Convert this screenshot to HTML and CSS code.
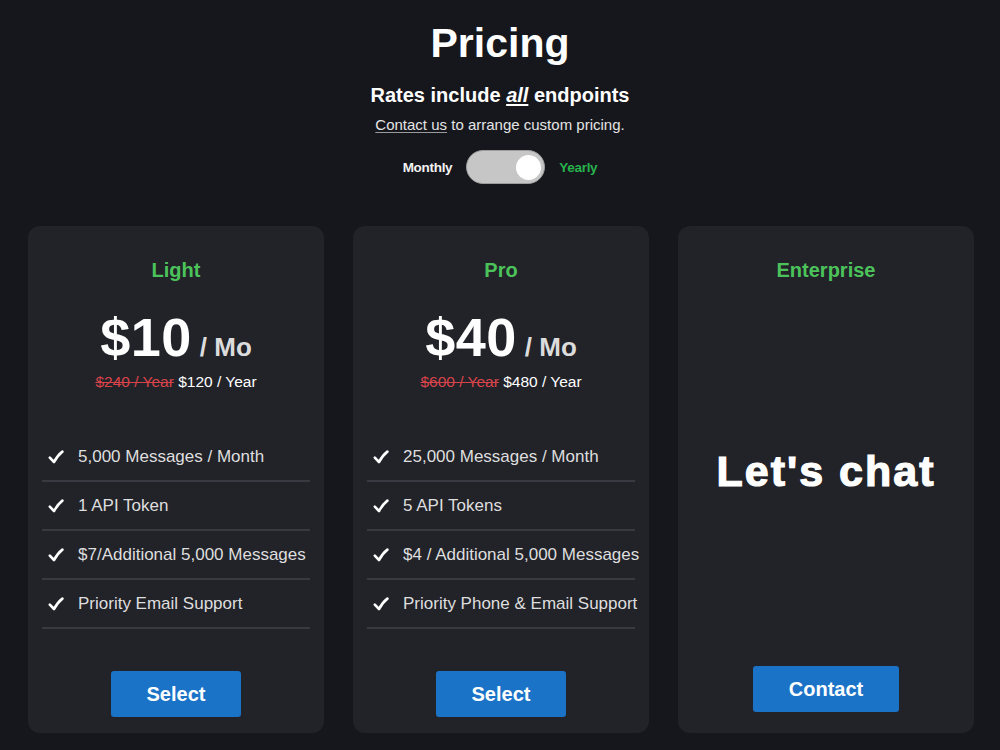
FILE: index.html
```html
<!DOCTYPE html>
<html lang="en">
<head>
<meta charset="utf-8">
<title>Pricing</title>
<link rel="stylesheet" href="styles.css">
</head>
<body>
<header class="intro">
  <h1 class="title">Pricing</h1>
  <p class="subtitle">Rates include <em class="all">all</em> endpoints</p>
  <p class="note"><a class="note-link" href="#">Contact us</a> to arrange custom pricing.</p>
  <div class="billing">
    <span class="billing-label">Monthly</span>
    <span class="switch"><span class="knob"></span></span>
    <span class="billing-label active">Yearly</span>
  </div>
</header>

<main class="plans">
  <section class="card">
    <h2 class="plan-name">Light</h2>
    <div class="price"><span class="amount">$10</span><span class="per">/ Mo</span></div>
    <div class="yearly"><s class="old">$240 / Year</s> <span class="new">$120 / Year</span></div>
    <ul class="features">
      <li class="feature"><svg class="check" viewBox="0 0 16 14"><path d="M1.8 7.6 L6 12 C8.5 7.5 11 4.2 14.4 1.6"/></svg>5,000 Messages / Month</li>
      <li class="feature"><svg class="check" viewBox="0 0 16 14"><path d="M1.8 7.6 L6 12 C8.5 7.5 11 4.2 14.4 1.6"/></svg>1 API Token</li>
      <li class="feature"><svg class="check" viewBox="0 0 16 14"><path d="M1.8 7.6 L6 12 C8.5 7.5 11 4.2 14.4 1.6"/></svg>$7/Additional 5,000 Messages</li>
      <li class="feature"><svg class="check" viewBox="0 0 16 14"><path d="M1.8 7.6 L6 12 C8.5 7.5 11 4.2 14.4 1.6"/></svg>Priority Email Support</li>
    </ul>
    <button class="btn">Select</button>
  </section>

  <section class="card">
    <h2 class="plan-name">Pro</h2>
    <div class="price"><span class="amount">$40</span><span class="per">/ Mo</span></div>
    <div class="yearly"><s class="old">$600 / Year</s> <span class="new">$480 / Year</span></div>
    <ul class="features">
      <li class="feature"><svg class="check" viewBox="0 0 16 14"><path d="M1.8 7.6 L6 12 C8.5 7.5 11 4.2 14.4 1.6"/></svg>25,000 Messages / Month</li>
      <li class="feature"><svg class="check" viewBox="0 0 16 14"><path d="M1.8 7.6 L6 12 C8.5 7.5 11 4.2 14.4 1.6"/></svg>5 API Tokens</li>
      <li class="feature"><svg class="check" viewBox="0 0 16 14"><path d="M1.8 7.6 L6 12 C8.5 7.5 11 4.2 14.4 1.6"/></svg>$4 / Additional 5,000 Messages</li>
      <li class="feature"><svg class="check" viewBox="0 0 16 14"><path d="M1.8 7.6 L6 12 C8.5 7.5 11 4.2 14.4 1.6"/></svg>Priority Phone &amp; Email Support</li>
    </ul>
    <button class="btn">Select</button>
  </section>

  <section class="card enterprise">
    <h2 class="plan-name">Enterprise</h2>
    <p class="chat">Let's chat</p>
    <button class="btn btn-contact">Contact</button>
  </section>
</main>
</body>
</html>
```

FILE: styles.css
```css
* { box-sizing: border-box; }

html, body {
  margin: 0;
  padding: 0;
  background: #16171d;
}

body {
  font-family: "Liberation Sans", Arial, sans-serif;
  color: #ffffff;
  width: 1000px;
  height: 750px;
  overflow: hidden;
}

.intro {
  display: flex;
  flex-direction: column;
  align-items: center;
  padding-top: 19px;
}

.title {
  margin: 0;
  font-size: 41px;
  line-height: 48px;
  font-weight: 700;
}

.subtitle {
  margin: 16px 0 0;
  font-size: 20px;
  line-height: 24px;
  font-weight: 700;
}

.all {
  font-style: italic;
  text-decoration: underline;
  text-underline-offset: 2px;
}

.note {
  margin: 9px 0 0;
  font-size: 15px;
  line-height: 18px;
  color: #e4e4e4;
}

.note-link {
  color: #e4e4e4;
  text-decoration: underline;
  text-decoration-color: #9a9a9a;
  text-underline-offset: 2px;
}

.billing {
  display: flex;
  align-items: center;
  gap: 14px;
  margin-top: 16px;
}

.billing-label {
  font-size: 13.5px;
  font-weight: 700;
  color: #f2f2f2;
  letter-spacing: -0.3px;
}

.billing-label.active {
  color: #27b24c;
}

.switch {
  display: flex;
  align-items: center;
  justify-content: flex-end;
  width: 79px;
  height: 34px;
  border-radius: 17px;
  background: #c6c6c6;
  border: 1.5px solid #9c9c9c;
  padding-right: 3.5px;
}

.knob {
  width: 25px;
  height: 25px;
  border-radius: 50%;
  background: #ffffff;
}

.plans {
  display: grid;
  grid-template-columns: repeat(3, minmax(0, 1fr));
  gap: 29px;
  width: 946px;
  margin: 42px 0 0 28px;
}

.card {
  display: flex;
  flex-direction: column;
  align-items: center;
  height: 507px;
  background: #222329;
  border-radius: 12px;
  padding: 32px 14px 16px;
}

.plan-name {
  margin: 0;
  font-size: 20px;
  line-height: 24px;
  font-weight: 700;
  color: #4cc25b;
}

.price {
  margin-top: 25px;
  font-size: 54px;
  line-height: 60px;
  white-space: nowrap;
}

.amount {
  font-size: 54px;
  line-height: 1;
  font-weight: 700;
  color: #ffffff;
  letter-spacing: 0.5px;
}

.per {
  margin-left: 8px;
  font-size: 26px;
  line-height: 1;
  font-weight: 700;
  color: #dcdcdc;
}

.yearly {
  margin-top: 6px;
  font-size: 15.5px;
  line-height: 18px;
  white-space: nowrap;
}

.old {
  color: #d8434b;
}

.new {
  color: #ffffff;
}

.features {
  list-style: none;
  margin: 42px 0 0;
  padding: 0;
  width: 100%;
}

.feature {
  display: flex;
  align-items: center;
  gap: 14px;
  padding: 14px 0 13px 6px;
  font-size: 17px;
  line-height: 20px;
  color: #dedede;
  border-bottom: 2px solid #393a41;
  white-space: nowrap;
}

.check {
  width: 16px;
  height: 14px;
  flex: none;
}

.check path {
  fill: none;
  stroke: #ffffff;
  stroke-width: 2.6;
  stroke-linecap: round;
  stroke-linejoin: round;
}

.btn {
  margin-top: auto;
  height: 46px;
  padding: 0 36px;
  border: none;
  border-radius: 3px;
  background: #1b73c8;
  color: #ffffff;
  font-family: "Liberation Sans", Arial, sans-serif;
  font-size: 20px;
  font-weight: 700;
  cursor: pointer;
}

.chat {
  margin: 164px 0 0;
  font-size: 43px;
  line-height: 50px;
  font-weight: 700;
  letter-spacing: 2px;
  -webkit-text-stroke: 1.2px #ffffff;
  white-space: nowrap;
}

.btn-contact {
  margin-bottom: 5px;
}
```
